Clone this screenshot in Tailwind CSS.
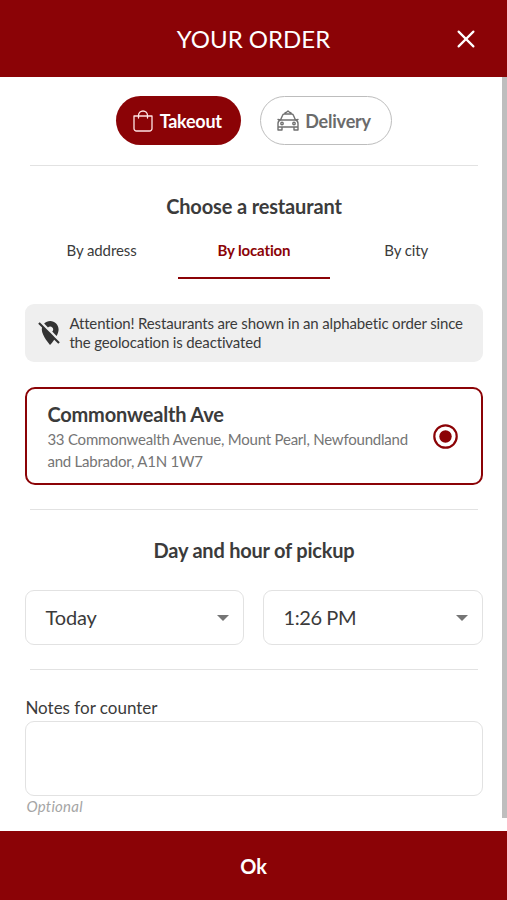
<!DOCTYPE html>
<html lang="en">
<head>
<meta charset="utf-8">
<title>Your order</title>
<script src="https://cdn.jsdelivr.net/npm/@tailwindcss/browser@4"></script>
</head>
<body class="bg-white">
<div class="flex h-[900px] w-[507px] flex-col overflow-hidden bg-white font-[Lato,sans-serif] text-[#3b3b3b] whitespace-nowrap [font-variant-ligatures:none]">
  <header class="grid h-[77px] shrink-0 grid-cols-[83px_1fr_83px] items-center bg-[#8b0306] text-white">
    <span></span>
    <h1 class="text-center text-[24px] leading-[30px]">YOUR ORDER</h1>
    <button class="flex justify-center" aria-label="Close">
      <svg class="h-[18px] w-[18px]" viewBox="0 0 18 18" fill="none" stroke="currentColor" stroke-width="2.2" stroke-linecap="round"><path d="M1.6 1.6 16.4 16.4M16.4 1.6 1.6 16.4"/></svg>
    </button>
  </header>
  <div class="flex h-[754px] shrink-0">
    <main class="flex w-[502px] flex-col pr-[19.5px] pl-[25.4px] pt-[19px]">
      <div class="flex h-[49px] shrink-0 justify-center gap-[19.5px]">
        <button class="flex w-[125px] items-center rounded-full bg-[#8b0306] pl-[17px] text-[18px] font-bold tracking-[-0.27px] text-white">
          <svg class="mr-[7px] h-[22px] w-[20px] shrink-0" viewBox="0 0 20 22" fill="none" stroke="#ffe4e4" stroke-width="1.3" stroke-linejoin="round" stroke-linecap="round"><path d="M1 6h18v12.500a2.500 2.500 0 0 1-2.500 2.500h-13a2.500 2.500 0 0 1-2.500-2.500zM5.500 8V5.500a4.500 4.500 0 0 1 9 0V8"/></svg>
          <span class="pt-[2px]">Takeout</span>
        </button>
        <button class="flex w-[132px] items-center rounded-full border border-[#bdbdbd] pl-[16px] text-[18px] font-bold tracking-[-0.2px] text-[#6b6b6b]">
          <svg class="mr-[6px] h-[21px] w-[22px] shrink-0" viewBox="0 0 22 21" fill="none" stroke="#707070" stroke-width="1.4" stroke-linejoin="round" stroke-linecap="round"><path d="M7.500 4Q7.700 2.500 9.500 2.300L11 1l1.500 1.300Q14.300 2.500 14.500 4M3.500 10 5.600 5.200Q6 4 7.200 4h7.600q1.200 0 1.600 1.200L18.500 10M1 9.500 3.500 10h15l2.500-.5M3.500 10Q1 10.800 1 13.500V20h4v-3h12v3h4v-6.500q0-2.700-2.500-3.500M1 17h4M17 17h4"/><circle cx="5" cy="13.500" r="1.200"/><circle cx="17" cy="13.500" r="1.200"/></svg>
          <span class="pt-[2px]">Delivery</span>
        </button>
      </div>
      <hr class="mx-[4.500px] mt-[20px] shrink-0 border-[#e2e2e2]">
      <h2 class="mt-[28px] text-center text-[20px] leading-[24px] font-bold tracking-[-0.15px]">Choose a restaurant</h2>
      <nav class="mt-[21px] grid h-[40px] shrink-0 grid-cols-3 text-center text-[15px] leading-[20px] tracking-[-0.1px]">
        <span class="pt-[1px]">By address</span>
        <span class="border-b-2 border-[#8b0306] pt-[1px] font-bold tracking-[-0.15px] text-[#8b0306]">By location</span>
        <span class="pt-[1px]">By city</span>
      </nav>
      <div class="mt-[25px] flex h-[58px] shrink-0 items-center rounded-[9px] bg-[#efefef] pl-[13px] text-[15px] leading-[19px] tracking-[-0.15px]">
        <svg class="mr-[9px] h-[24px] w-[22px] shrink-0" viewBox="2 2 18 20" fill="#333"><path d="M12 6.500c1.380 0 2.500 1.120 2.500 2.500 0 .740-.330 1.390-.830 1.850l3.630 3.630c.980-1.860 1.700-3.800 1.700-5.480 0-3.870-3.130-7-7-7-1.980 0-3.760.830-5.040 2.150l3.190 3.190c.460-.520 1.110-.840 1.850-.840zm4.370 9.600l-4.630-4.630-.110-.110L3.270 3 2 4.270l3.180 3.180C5.070 7.950 5 8.470 5 9c0 5.250 7 13 7 13s1.670-1.850 3.380-4.350L18.730 21 20 19.730z"/></svg>
        <p>Attention! Restaurants are shown in an alphabetic order since<br>the geolocation is deactivated</p>
      </div>
      <section class="mt-[25px] flex h-[98px] shrink-0 items-center justify-between rounded-[10px] border-[2px] border-[#8b0306] pr-[23px] pl-[20px]">
        <div class="pt-px">
          <h3 class="text-[20px] leading-[25px] font-bold tracking-[-0.18px]">Commonwealth Ave</h3>
          <p class="pt-px text-[15px] leading-[22px] tracking-[-0.22px] text-[#757575]">33 Commonwealth Avenue, Mount Pearl, Newfoundland<br>and Labrador, A1N 1W7</p>
        </div>
        <svg class="h-[25px] w-[25px] shrink-0" viewBox="0 0 25 25"><circle cx="12.500" cy="12.500" r="11.200" fill="none" stroke="#8b0306" stroke-width="2.200"/><circle cx="12.500" cy="12.500" r="6.200" fill="#8b0306"/></svg>
      </section>
      <hr class="mx-[4.500px] mt-[24px] shrink-0 border-[#e2e2e2]">
      <h2 class="mt-[28px] text-center text-[20px] leading-[24px] font-bold tracking-[-0.22px]">Day and hour of pickup</h2>
      <div class="mt-[28px] grid h-[55px] shrink-0 grid-cols-2 gap-[19px] text-[20px]">
        <div class="flex items-center justify-between rounded-[9px] border border-[#e2e2e2] pr-[14px] pl-[19px]"><span class="-mt-px tracking-[-0.1px]">Today</span><svg class="h-[6px] w-[12px]" viewBox="0 0 12 6" fill="#757575"><path d="M0 0h12L6 6z"/></svg></div>
        <div class="flex items-center justify-between rounded-[9px] border border-[#e2e2e2] pr-[14px] pl-[19px]"><span class="-mt-px tracking-[-0.4px]">1:26 PM</span><svg class="h-[6px] w-[12px]" viewBox="0 0 12 6" fill="#757575"><path d="M0 0h12L6 6z"/></svg></div>
      </div>
      <hr class="mx-[4.500px] mt-[24px] shrink-0 border-[#e2e2e2]">
      <label class="mt-[26px] text-[17px] leading-[24px]">Notes for counter</label>
      <div class="mt-px h-[75px] shrink-0 rounded-[9px] border border-[#e2e2e2]"></div>
      <p class="pl-px text-[15px] leading-[20px] tracking-[0.25px] text-[#a5a5a5] italic">Optional</p>
    </main>
    <div class="h-[741px] w-[5px] bg-[#bebebe]"></div>
  </div>
  <button class="flex h-[69px] shrink-0 items-center justify-center bg-[#8b0306] text-[20px] font-bold text-white">Ok</button>
</div>
</body>
</html>
